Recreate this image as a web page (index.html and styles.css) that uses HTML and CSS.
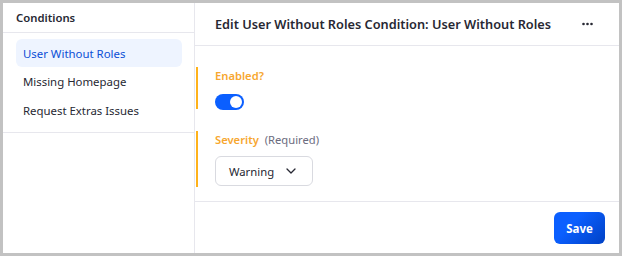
FILE: index.html
```html
<!DOCTYPE html>
<html>
<head>
<meta charset="utf-8">
<link rel="stylesheet" href="styles.css">
</head>
<body>
<div class="frame">
  <aside class="sidebar">
    <div class="side-head">Conditions</div>
    <nav class="side-nav">
      <div class="item active">User Without Roles</div>
      <div class="item">Missing Homepage</div>
      <div class="item">Request Extras Issues</div>
    </nav>
  </aside>
  <main class="main">
    <div class="main-head">
      <div class="title">Edit User Without Roles Condition: User Without Roles</div>
      <div class="more">
        <svg width="11" height="4" viewBox="0 0 11 4"><circle cx="1.5" cy="2" r="1.3" fill="#272833"/><circle cx="5.5" cy="2" r="1.3" fill="#272833"/><circle cx="9.5" cy="2" r="1.3" fill="#272833"/></svg>
      </div>
    </div>
    <div class="form">
      <div class="field f1">
        <div class="label">Enabled?</div>
        <div class="toggle"><span class="knob"></span></div>
      </div>
      <div class="field f2">
        <div class="label">Severity <span class="req">(Required)</span></div>
        <div class="select">
          <span>Warning</span>
          <svg width="10" height="6" viewBox="0 0 10 6"><path d="M1 1 L5 5 L9 1" fill="none" stroke="#272833" stroke-width="1.3" stroke-linecap="round" stroke-linejoin="round"/></svg>
        </div>
      </div>
    </div>
    <div class="footer">
      <button class="save">Save</button>
    </div>
  </main>
</div>
</body>
</html>
```
FILE: styles.css
```css
html, body { margin: 0; padding: 0; }
body {
  background: #c2c2c2;
  padding: 3px;
  width: 622px;
  height: 256px;
  box-sizing: border-box;
  font-family: "Noto Sans", "Open Sans", sans-serif;
  color: #272833;
}
.frame {
  background: #fff;
  display: flex;
  height: 250px;
}
.sidebar {
  width: 191px;
  border-right: 1px solid #e7e7ed;
  flex-shrink: 0;
}
.side-head {
  height: 29px;
  border-bottom: 1px solid #e7e7ed;
  display: flex;
  align-items: center;
  padding-left: 13px;
  font-size: 11.3px;
  font-weight: 600;
}
.side-nav {
  padding: 6px 12px 8px 13px;
  border-bottom: 1px solid #e7e7ed;
  display: flex;
  flex-direction: column;
  gap: 0.5px;
}
.item {
  height: 28px;
  display: flex;
  align-items: center;
  padding-left: 7px;
  font-size: 11.4px;
  border-radius: 6px;
  color: #272833;
}
.item.active {
  background: #eef4ff;
  color: #0b4fd6;
}
.main {
  flex: 1;
  display: flex;
  flex-direction: column;
}
.main-head {
  height: 42px;
  border-bottom: 1px solid #e7e7ed;
  display: flex;
  align-items: center;
  justify-content: space-between;
  padding: 0 26px 0 20px;
}
.title {
  font-size: 12.75px;
  font-weight: 600;
}
.more { display: flex; align-items: center; }
.form {
  flex: 1;
  padding-top: 21px;
  border-bottom: 1px solid #e7e7ed;
}
.field {
  margin-left: 1px;
  border-left: 2px solid #ffb21a;
  padding-left: 17px;
}
.f1 { height: 42px; }
.f2 { margin-top: 22px; height: 56px; }
.label {
  font-size: 11.2px;
  font-weight: 600;
  color: #f7a730;
  height: 18px;
  line-height: 18px;
}
.f1 .label { margin-bottom: 9px; }
.f2 .label { margin-bottom: 7px; }
.req {
  color: #6b6c7e;
  font-weight: 400;
  margin-left: 3px;
}
.toggle {
  width: 29px;
  height: 16px;
  border-radius: 8px;
  background: #0b5fff;
  position: relative;
}
.knob {
  position: absolute;
  right: 2px;
  top: 2px;
  width: 12px;
  height: 12px;
  border-radius: 50%;
  background: #fff;
}
.select {
  width: 98px;
  height: 30px;
  box-sizing: border-box;
  border: 1px solid #d9dae0;
  border-radius: 6px;
  display: flex;
  align-items: center;
  justify-content: space-between;
  padding: 0 16px 0 13px;
  font-size: 11.3px;
}
.footer {
  height: 51px;
  display: flex;
  align-items: center;
  justify-content: flex-end;
  padding-right: 14px;
}
.save {
  width: 51px;
  height: 32px;
  border: none;
  border-radius: 6px;
  background: linear-gradient(135deg, #0b5fff 0%, #0b5fff 35%, #0041c4 100%);
  color: #fff;
  font-family: "Noto Sans", "Open Sans", sans-serif;
  font-weight: 700;
  font-size: 11.5px;
  padding: 0;
  margin-top: 1px;
}
```
